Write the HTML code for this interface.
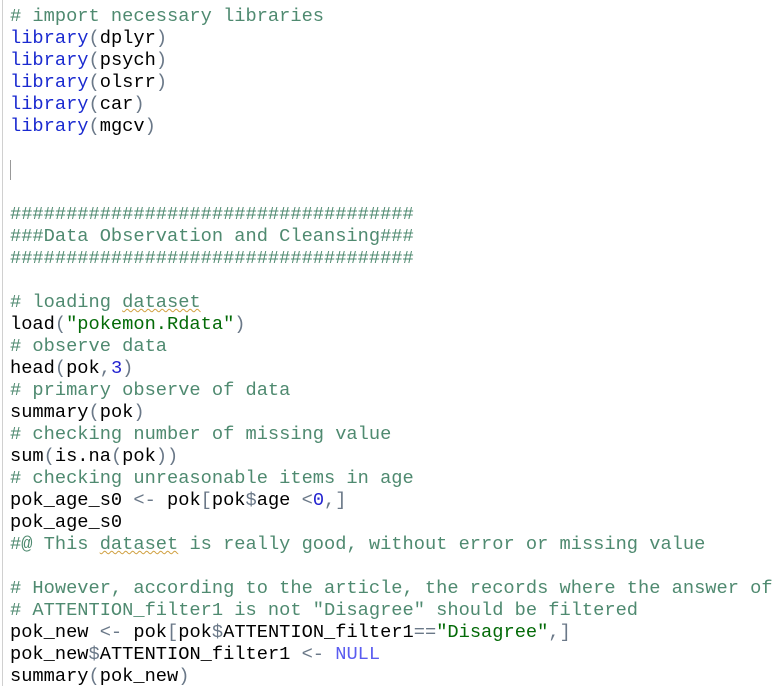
<!DOCTYPE html>
<html><head><meta charset="utf-8"><style>
html,body{margin:0;padding:0;background:#fff;width:781px;height:686px;overflow:hidden}
.b{position:absolute;left:2px;top:0;width:1px;height:686px;background:#d0d0d0}
pre{position:absolute;left:10px;top:5px;margin:0;font-family:"Liberation Mono",monospace;font-size:18.7px;line-height:22px;color:#000;white-space:pre}
.c{color:#4f8a70}.k{color:#1a2ad0}.p{color:#6a7888}.s{color:#036a07}.n{color:#2222d0}.u{color:#5a5cf0}
.w{text-decoration:underline wavy #d0a040;text-decoration-thickness:1px}
.cur{display:inline-block;width:1px;height:20px;background:#999;vertical-align:middle}
</style></head><body><div class="b"></div>
<pre><span class="c"># import necessary libraries</span>
<span class="k">library</span><span class="p">(</span>dplyr<span class="p">)</span>
<span class="k">library</span><span class="p">(</span>psych<span class="p">)</span>
<span class="k">library</span><span class="p">(</span>olsrr<span class="p">)</span>
<span class="k">library</span><span class="p">(</span>car<span class="p">)</span>
<span class="k">library</span><span class="p">(</span>mgcv<span class="p">)</span>

<span class="cur"></span>

<span class="c">####################################</span>
<span class="c">###Data Observation and Cleansing###</span>
<span class="c">####################################</span>

<span class="c"># loading <span class="w">dataset</span></span>
load<span class="p">(</span><span class="s">"pokemon.Rdata"</span><span class="p">)</span>
<span class="c"># observe data</span>
head<span class="p">(</span>pok<span class="p">,</span><span class="n">3</span><span class="p">)</span>
<span class="c"># primary observe of data</span>
summary<span class="p">(</span>pok<span class="p">)</span>
<span class="c"># checking number of missing value</span>
sum<span class="p">(</span>is.na<span class="p">(</span>pok<span class="p">))</span>
<span class="c"># checking unreasonable items in age</span>
pok_age_s0 <span class="p">&lt;-</span> pok<span class="p">[</span>pok<span class="p">$</span>age <span class="p">&lt;</span><span class="n">0</span><span class="p">,]</span>
pok_age_s0
<span class="c">#@ This <span class="w">dataset</span> is really good, without error or missing value</span>

<span class="c"># However, according to the article, the records where the answer of</span>
<span class="c"># ATTENTION_filter1 is not "Disagree" should be filtered</span>
pok_new <span class="p">&lt;-</span> pok<span class="p">[</span>pok<span class="p">$</span>ATTENTION_filter1<span class="p">==</span><span class="s">"Disagree"</span><span class="p">,]</span>
pok_new<span class="p">$</span>ATTENTION_filter1 <span class="p">&lt;-</span> <span class="u">NULL</span>
summary<span class="p">(</span>pok_new<span class="p">)</span></pre>
</body></html>
